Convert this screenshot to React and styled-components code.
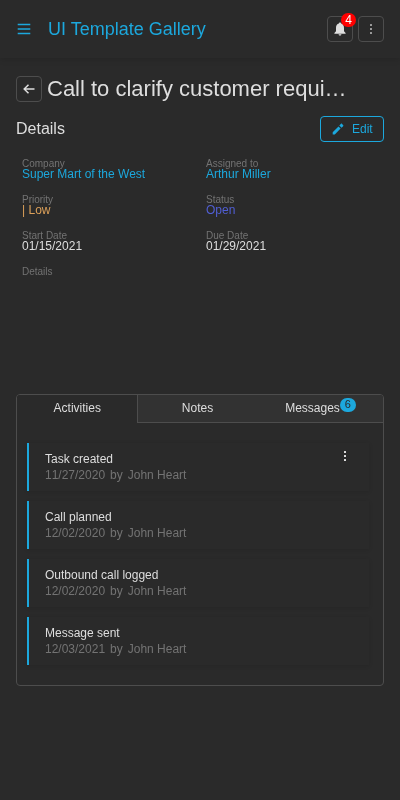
import React from "react";
import styled, { createGlobalStyle } from "styled-components";

const Global = createGlobalStyle`
  *, *::before, *::after { box-sizing: border-box; }
  body {
    margin: 0;
    background: #2a2a2a;
    color: #dedede;
    font: 12px/16px "Liberation Sans", Arial, sans-serif;
  }
  svg { display: block; }
`;

const Page = styled.div`
  min-height: 800px;
  overflow: hidden;
  will-change: transform;
`;

const Header = styled.header`
  display: flex;
  align-items: center;
  height: 58px;
  padding: 0 16px;
  box-shadow: 0 2px 6px rgba(0, 0, 0, 0.12);
`;

const MenuButton = styled.button`
  display: grid;
  place-items: center;
  width: 16px;
  height: 16px;
  padding: 0;
  border: 0;
  background: none;
  color: #1ca8dd;
`;

const Brand = styled.div`
  flex: 1;
  margin-left: 16px;
  font-size: 18px;
  line-height: 24px;
  color: #1ca8dd;
`;

const IconButton = styled.button`
  position: relative;
  display: grid;
  place-items: center;
  flex: none;
  width: 26px;
  height: 26px;
  margin: 0 0 0 ${(p) => p.$gap || 0}px;
  padding: 0;
  border: 1px solid #4d4d4d;
  border-radius: 4px;
  background: none;
  color: #dedede;
`;

const AlertBadge = styled.span`
  position: absolute;
  top: -4px;
  right: -4px;
  width: 15px;
  height: 14px;
  border-radius: 7px;
  background: #f00;
  color: #fff;
  font: 12px/14px "Liberation Sans", Arial, sans-serif;
  text-align: center;
`;

const TitleRow = styled.div`
  display: flex;
  align-items: center;
  height: 26px;
  margin: 18px 16px 0;
`;

const Title = styled.h1`
  flex: 1;
  min-width: 0;
  margin: 0 32px 0 5px;
  overflow: hidden;
  white-space: nowrap;
  font-size: 22px;
  font-weight: 400;
  line-height: 26px;
`;

const SectionRow = styled.div`
  display: flex;
  align-items: center;
  justify-content: space-between;
  height: 26px;
  margin: 14px 16px 0;
`;

const SectionTitle = styled.h2`
  margin: 0;
  font-size: 16px;
  font-weight: 400;
  line-height: 20px;
`;

const EditButton = styled.button`
  display: flex;
  align-items: center;
  gap: 7px;
  width: 64px;
  height: 26px;
  padding: 0 0 0 10px;
  border: 1px solid #1ca8dd;
  border-radius: 4px;
  background: none;
  color: #1ca8dd;
  font: 12px/14px "Liberation Sans", Arial, sans-serif;
`;

const Fields = styled.dl`
  display: grid;
  grid-template-columns: 184px 1fr;
  grid-auto-rows: 36px;
  margin: 16px 16px 0 22px;
  height: 236px;
`;

const Field = styled.div`
  display: flex;
  flex-direction: column;
`;

const Label = styled.dt`
  height: 9px;
  font-size: 10px;
  line-height: 12px;
  color: #737373;
`;

const Value = styled.dd`
  margin: 0;
  line-height: 14px;
  color: ${(p) => p.$color || "#dedede"};
`;

const Panel = styled.section`
  height: 292px;
  margin: 0 16px;
  border: 1px solid #4d4d4d;
  border-radius: 4px;
  overflow: hidden;
`;

const Tabs = styled.div`
  display: grid;
  grid-template-columns: 121px 119px 1fr;
  height: 28px;
`;

const Tab = styled.div`
  display: flex;
  justify-content: center;
  padding: 5px 0 0 ${(p) => p.$shift || 0}px;
  background: ${(p) => (p.$active ? "#2a2a2a" : "#323232")};
  border-right: ${(p) => (p.$active ? "1px solid #4d4d4d" : "0")};
  border-bottom: ${(p) => (p.$active ? "0" : "1px solid #4d4d4d")};
`;

const CountBadge = styled.span`
  width: 16px;
  height: 14px;
  margin-top: -2px;
  border-radius: 7px;
  background: #1ca8dd;
  color: #2a2a2a;
  font-size: 11px;
  line-height: 13px;
  text-align: center;
`;

const Activities = styled.div`
  display: flex;
  flex-direction: column;
  gap: 10px;
  padding: 20px 14px 20px 10px;
`;

const Card = styled.article`
  display: flex;
  justify-content: space-between;
  height: 48px;
  padding: 8px 20px 0 16px;
  border-left: 2px solid #1ca8dd;
  box-shadow: 0 1px 4px rgba(0, 0, 0, 0.12);
`;

const Meta = styled.div`
  display: flex;
  gap: 5px;
  color: #737373;
`;

const MetaDate = styled.span`
  min-width: 60px;
  font-kerning: none;
`;

const CardMenu = styled.div`
  width: 9px;
  height: 10px;
  margin-top: -1px;
`;

const MenuIcon = () => (
  <svg width="16" height="16" viewBox="0 0 16 16" fill="currentColor">
    <path d="M1.700 2.700h12.600v1.600H1.700zM1.700 7.200h12.600v1.600H1.700zM1.700 11.700h12.600v1.600H1.700z" />
  </svg>
);

const BellIcon = () => (
  <svg width="14" height="14" viewBox="0 0 14 14" fill="currentColor">
    <path d="M7 .5c.7 0 1.100.4 1.100 1.100C10 2.100 11 3.700 11 6v3.200L12.600 11v.8H1.400V11L3 9.200V6c0-2.300 1-3.900 2.900-4.400C5.900.9 6.300.5 7 .5zM5.600 12.200h2.800c0 .8-.6 1.300-1.400 1.300s-1.400-.5-1.400-1.300z" />
  </svg>
);

const DotsIcon = ({ size = 1.7, gap = 4 }) => (
  <svg width="10" height="12" viewBox="0 0 10 12" fill="currentColor">
    {[-1, 0, 1].map((n) => (
      <rect key={n} x={5 - size / 2} y={6 + n * gap - size / 2} width={size} height={size} rx=".3" />
    ))}
  </svg>
);

const BackIcon = () => (
  <svg width="14" height="14" viewBox="0 0 14 14" fill="none" stroke="currentColor" strokeWidth="1.5">
    <path d="M12.500 7H2.200M6.500 2.700L2.200 7l4.300 4.300" />
  </svg>
);

const PencilIcon = () => (
  <svg width="14" height="14" viewBox="0 0 14 14" fill="currentColor">
    <path d="M1.700 10.300L7.500 4.500 9.600 6.600l-5.800 5.800H1.700zM8.300 3.400l1.500-1.500c.4-.4.8-.4 1.200 0l1.100 1.100c.4.4.4.8 0 1.200l-1.500 1.500z" />
  </svg>
);

const fields = [
  ["Company", "Super Mart of the West", "#1ca8dd"],
  ["Assigned to", "Arthur Miller", "#1ca8dd"],
  ["Priority", "| Low", "#dba05a"],
  ["Status", "Open", "#505ed3"],
  ["Start Date", "01/15/2021"],
  ["Due Date", "01/29/2021"],
  ["Details", ""],
];

const activities = [
  ["Task created", "11/27/2020"],
  ["Call planned", "12/02/2020"],
  ["Outbound call logged", "12/02/2020"],
  ["Message sent", "12/03/2021"],
];

export default function App() {
  return (
    <Page>
      <Global />
      <Header>
        <MenuButton aria-label="Menu"><MenuIcon /></MenuButton>
        <Brand>UI Template Gallery</Brand>
        <IconButton aria-label="Notifications">
          <BellIcon />
          <AlertBadge>4</AlertBadge>
        </IconButton>
        <IconButton $gap={5} aria-label="More"><DotsIcon /></IconButton>
      </Header>

      <TitleRow>
        <IconButton aria-label="Back"><BackIcon /></IconButton>
        <Title>Call to clarify customer requi…</Title>
      </TitleRow>

      <SectionRow>
        <SectionTitle>Details</SectionTitle>
        <EditButton><PencilIcon />Edit</EditButton>
      </SectionRow>

      <Fields>
        {fields.map(([label, value, color]) => (
          <Field key={label}>
            <Label>{label}</Label>
            <Value $color={color}>{value}</Value>
          </Field>
        ))}
      </Fields>

      <Panel>
        <Tabs>
          <Tab $active $shift={0.5}>Activities</Tab>
          <Tab>Notes</Tab>
          <Tab $shift={1}>Messages<CountBadge>6</CountBadge></Tab>
        </Tabs>
        <Activities>
          {activities.map(([name, date], i) => (
            <Card key={name}>
              <div>
                <div>{name}</div>
                <Meta><MetaDate>{date}</MetaDate><span>by</span><span>John Heart</span></Meta>
              </div>
              {i === 0 && <CardMenu><DotsIcon size={2} /></CardMenu>}
            </Card>
          ))}
        </Activities>
      </Panel>
    </Page>
  );
}
